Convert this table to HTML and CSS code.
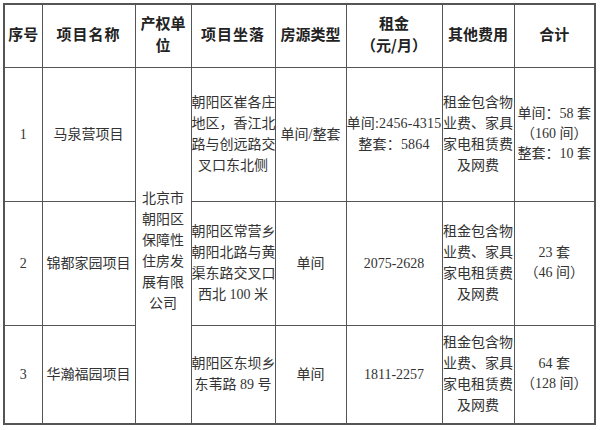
FILE: index.html
```html
<!DOCTYPE html>
<html lang="zh">
<head>
<meta charset="utf-8">
<link rel="stylesheet" href="styles.css">
</head>
<body>
<div class="wrap">
<table class="grid">
  <colgroup>
    <col class="c1"><col class="c2"><col class="c3"><col class="c4"><col class="c5"><col class="c6"><col class="c7"><col class="c8">
  </colgroup>
  <thead>
    <tr class="r-head">
      <th>序号</th>
      <th class="wide">项目名称</th>
      <th>产权单<br>位</th>
      <th class="wide">项目坐落</th>
      <th>房源类型</th>
      <th>租金<br>（元/月）</th>
      <th>其他费用</th>
      <th>合计</th>
    </tr>
  </thead>
  <tbody>
    <tr class="r1">
      <td>1</td>
      <td>马泉营项目</td>
      <td rowspan="3" class="owner">北京市<br>朝阳区<br>保障性<br>住房发<br>展有限<br>公司</td>
      <td class="addr">朝阳区崔各庄<br>地区，香江北<br>路与创远路交<br>叉口东北侧</td>
      <td>单间/整套</td>
      <td class="rent">单间:2456-4315<br>整套：5864</td>
      <td class="fee">租金包含物<br>业费、家具<br>家电租赁费<br>及网费</td>
      <td class="total">单间：58 套<br>（160 间）<br>整套：10 套</td>
    </tr>
    <tr class="r2">
      <td>2</td>
      <td>锦都家园项目</td>
      <td class="addr">朝阳区常营乡<br>朝阳北路与黄<br>渠东路交叉口<br>西北 100 米</td>
      <td>单间</td>
      <td>2075-2628</td>
      <td class="fee">租金包含物<br>业费、家具<br>家电租赁费<br>及网费</td>
      <td class="total">23 套<br>（46 间）</td>
    </tr>
    <tr class="r3">
      <td>3</td>
      <td>华瀚福园项目</td>
      <td class="addr">朝阳区东坝乡<br>东苇路 89 号</td>
      <td>单间</td>
      <td>1811-2257</td>
      <td class="fee">租金包含物<br>业费、家具<br>家电租赁费<br>及网费</td>
      <td class="total">64 套<br>（128 间）</td>
    </tr>
  </tbody>
</table>
</div>
</body>
</html>
```

FILE: styles.css
```css
html, body {
  margin: 0;
  padding: 0;
  background: #ffffff;
}

.wrap {
  padding: 3px 0 0 3px;
}

.grid {
  border-collapse: collapse;
  table-layout: fixed;
  width: 592px;
  border: 2px solid #555555;
  font-family: "Liberation Serif", "Noto Sans CJK SC", serif;
  font-size: 14px;
  color: #333333;
}

.c1 { width: 38px; }
.c2 { width: 93px; }
.c3 { width: 56px; }
.c4 { width: 84px; }
.c5 { width: 71px; }
.c6 { width: 96px; }
.c7 { width: 72px; }
.c8 { width: 81px; }

.grid th,
.grid td {
  border: 1px solid #555555;
  padding: 0;
  text-align: center;
  vertical-align: middle;
  white-space: nowrap;
  overflow: visible;
}

.grid th {
  font-family: "Noto Sans CJK SC", sans-serif;
  font-weight: 700;
  font-size: 15px;
  line-height: 22px;
  color: #222222;
  padding-bottom: 3px;
}

.grid th.wide {
  letter-spacing: 1px;
}

.grid td {
  line-height: 21px;
}

.r-head { height: 63px; }
.r1 { height: 134px; }
.r2 { height: 124px; }
.r3 { height: 99px; }

.grid td.owner {
  padding-top: 12px;
}

.grid td.total {
  line-height: 20px;
}

.grid td.rent {
  letter-spacing: 0.2px;
}
```
